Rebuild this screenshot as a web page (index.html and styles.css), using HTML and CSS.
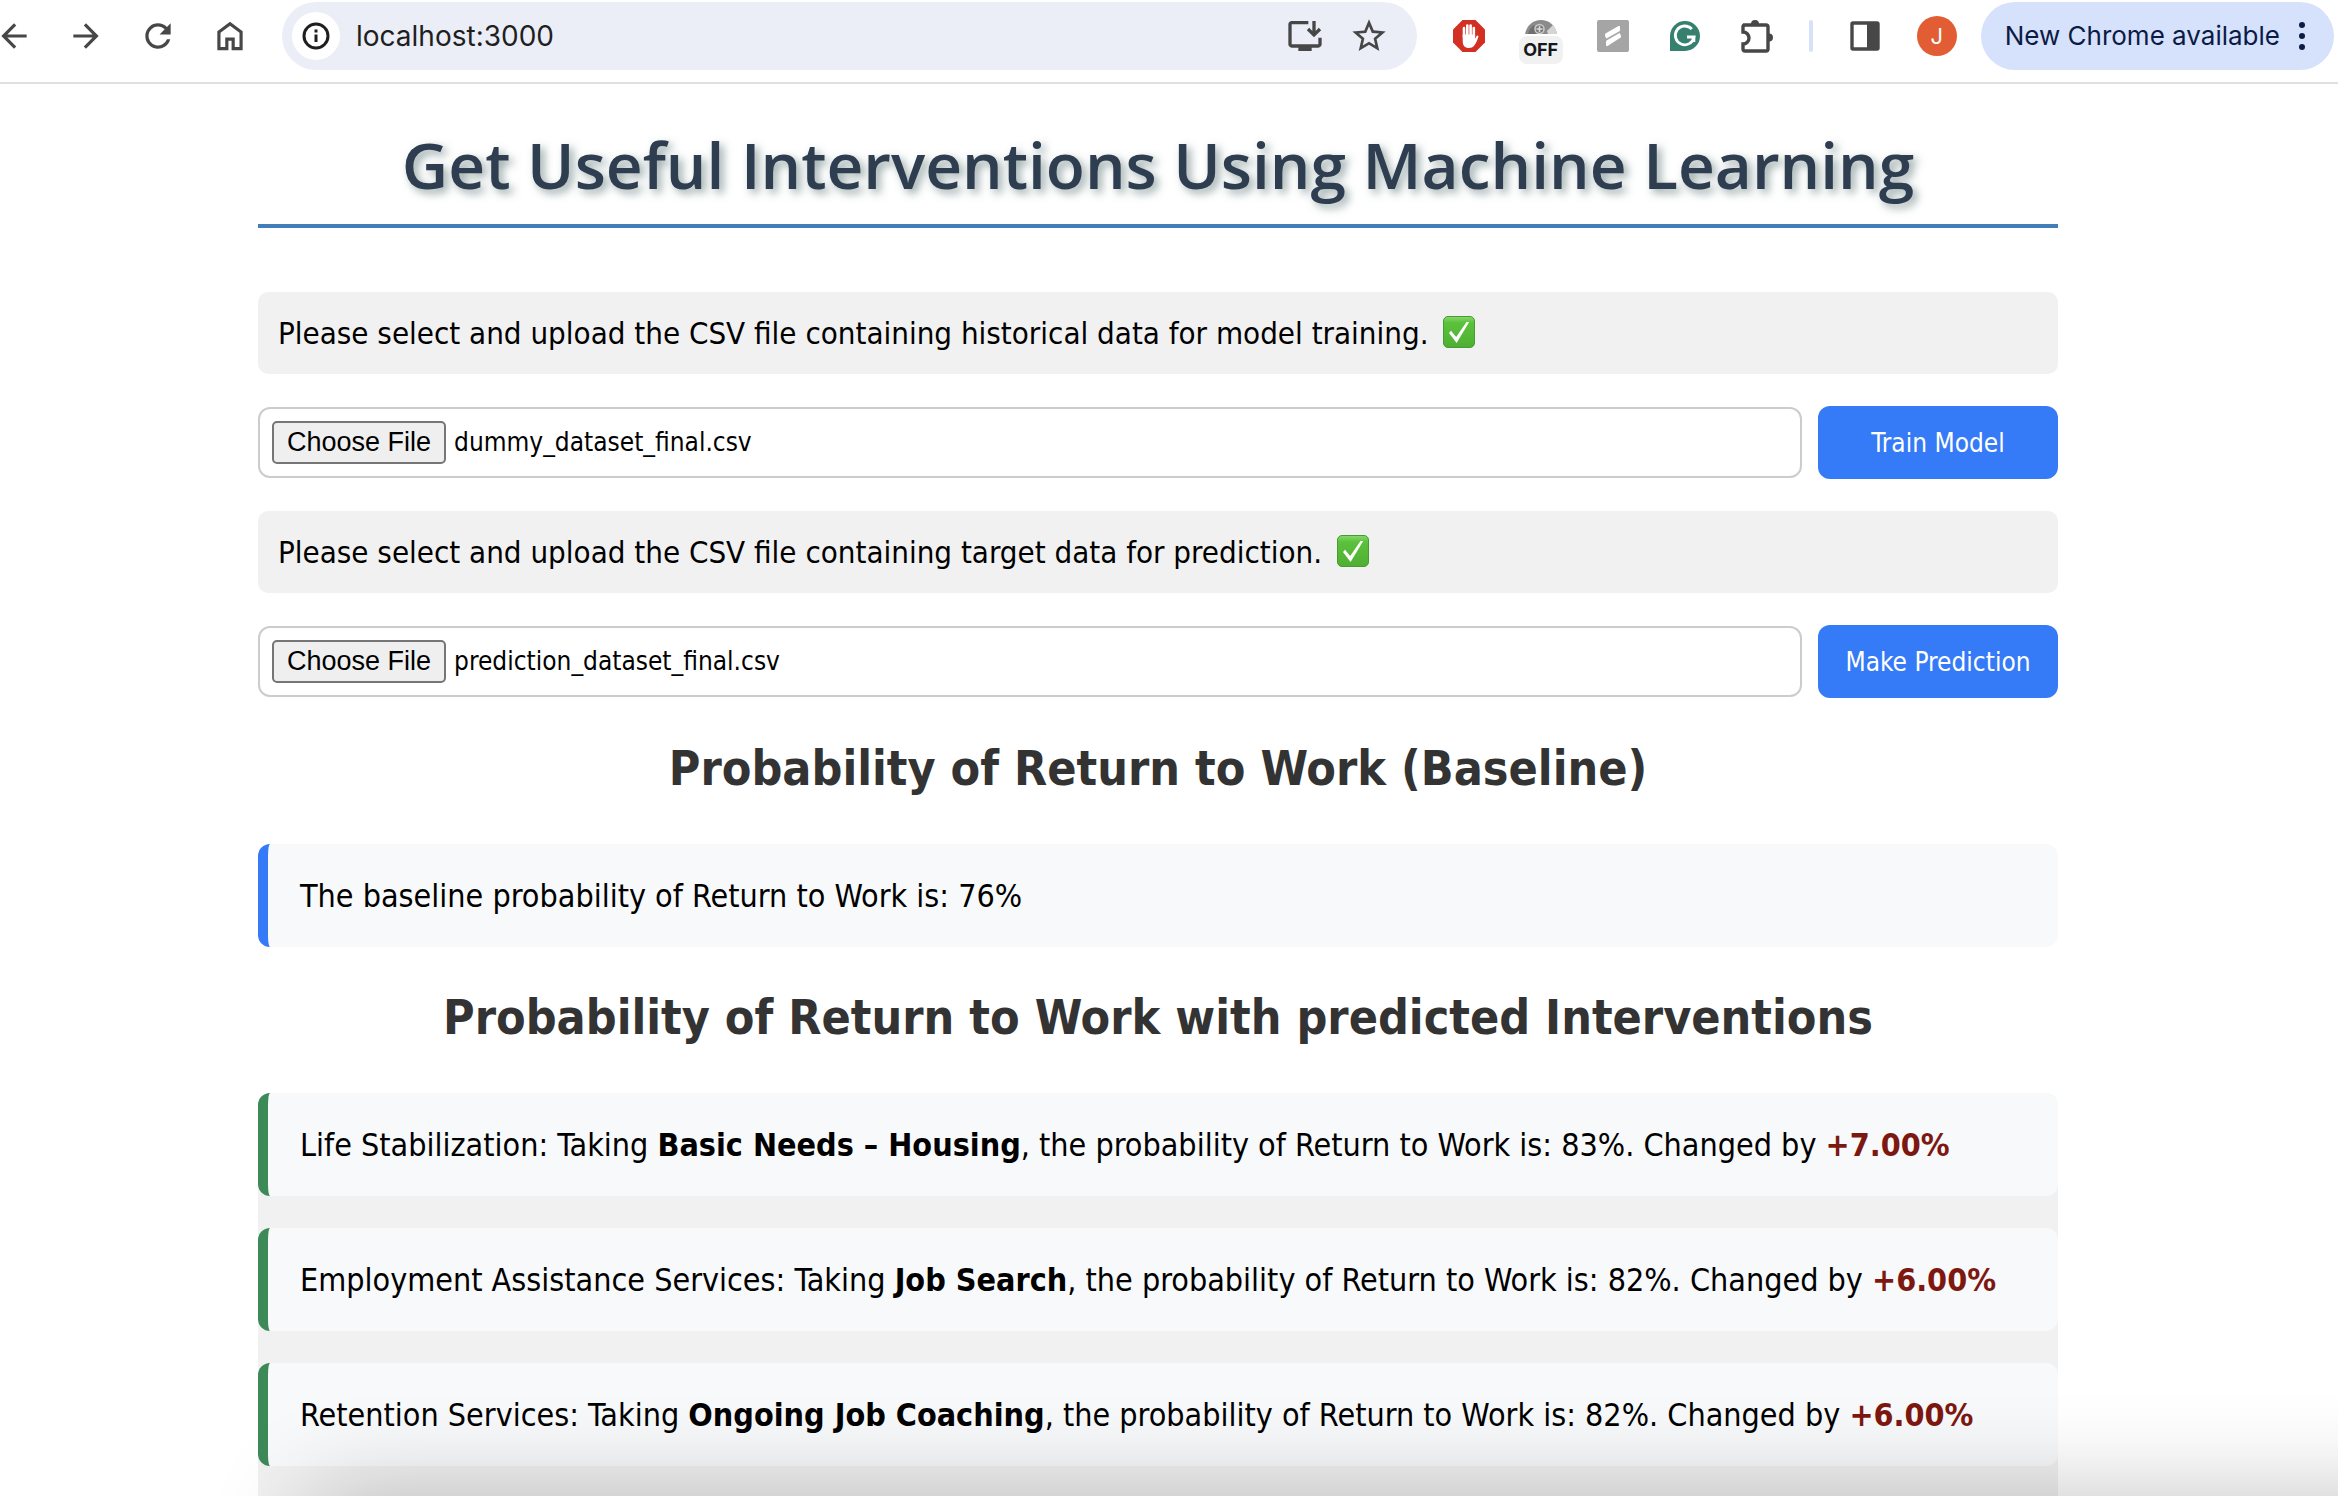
FILE: index.html
```html
<!DOCTYPE html>
<html lang="en">
<head>
<meta charset="utf-8">
<meta name="viewport" content="width=device-width, initial-scale=1">
<title>Get Useful Interventions Using Machine Learning</title>
<link rel="stylesheet" href="styles.css">
</head>
<body>
<header class="toolbar">
  <nav class="nav" aria-label="Navigation">
    <button class="tool" aria-label="Back"><svg class="icon" viewBox="0 0 24 24"><path d="M20 11H7.83l5.59-5.59L12 4l-8 8 8 8 1.41-1.41L7.83 13H20z"/></svg></button>
    <button class="tool" aria-label="Forward"><svg class="icon" viewBox="0 0 24 24"><path d="M4 13h12.17l-5.59 5.59L12 20l8-8-8-8-1.41 1.41L16.17 11H4z"/></svg></button>
    <button class="tool" aria-label="Reload"><svg class="icon" viewBox="0 0 24 24"><path d="M17.65 6.35A7.95 7.95 0 0 0 12 4a8 8 0 1 0 7.73 10h-2.08A6 6 0 1 1 12 6c1.66 0 3.14.69 4.22 1.78L13 11h7V4z"/></svg></button>
    <button class="tool" aria-label="Home"><svg class="icon" viewBox="0 0 24 24"><path d="M12 5.5l6 4.5v9h-3v-6H9v6H6v-9zM12 3L4 9v12h7v-6h2v6h7V9z"/></svg></button>
  </nav>
  <div class="omnibox">
    <button class="site-info" aria-label="Site information"><svg class="icon-small" viewBox="0 0 28 28"><circle cx="14" cy="14" r="12" fill="none" stroke="#1f1f1f" stroke-width="3"/><path d="M12.5 12.5h3V20h-3zM12.5 7.5h3v3h-3z" fill="#1f1f1f"/></svg></button>
    <input class="address" type="text" value="localhost:3000" aria-label="Address">
    <button class="page-action" aria-label="Install app"><svg class="icon-large" viewBox="0 0 24 24"><path d="M20 17H4V5h10V3H4c-1.1 0-2 .9-2 2v12c0 1.1.9 2 2 2h4v2h8v-2h4c1.1 0 2-.9 2-2v-4h-2z"/><path d="M17.4 3v8M13.8 7.800l3.6 3.6L21 7.8" fill="none" stroke="#474747" stroke-width="2"/></svg></button>
    <button class="page-action" aria-label="Bookmark this page"><svg class="icon-large" viewBox="0 0 24 24"><path d="M22 9.24l-7.19-.62L12 2 9.19 8.63 2 9.24l5.46 4.73L5.82 21 12 17.27 18.18 21l-1.63-7.03zM12 15.4l-3.76 2.27 1-4.28-3.32-2.88 4.38-.38L12 6.1l1.71 4.04 4.38.38-3.32 2.88 1 4.28z"/></svg></button>
  </div>
  <div class="extensions">
    <button class="tool" aria-label="Ad blocker"><svg class="icon-ext" viewBox="0 0 32 32"><path d="M9.5 0h13L32 9.5v13L22.5 32h-13L0 22.5v-13z" fill="#d33024"/><g fill="none" stroke="#fff" stroke-width="2.6" stroke-linecap="round"><path d="M11 17V8M14.3 16V5.5M17.6 16V5.5M20.8 17V8"/></g><path d="M9.7 14.5h12.4v4.2l1.5-2.6c.7-1.3 2.3-.6 1.7.9-1.2 3.2-2.1 6.4-4.2 8.8-1.3 1.5-3 2.2-5.2 2.2-4.1 0-6.2-2.6-6.2-7z" fill="#fff"/></svg></button>
    <button class="tool tool-badged" aria-label="Blocker, off"><svg class="dome" viewBox="0 0 32 14"><path d="M0 14C2 5 8 0 16 0s14 5 16 14z" fill="#8b8b8b"/><path d="M22 11l6-6c2 2 3 5 4 9h-9z" fill="#d5d5d5"/><path d="M3 14c1-4 3-7 6-9l3 9z" fill="#6f6f6f"/><circle cx="14.5" cy="9" r="4.5" fill="#777" stroke="#ccc" stroke-width="1.5"/><path d="M14.5 6v6M11.5 9h6" stroke="#ddd" stroke-width="1.5"/></svg><span class="badge">OFF</span></button>
    <button class="tool" aria-label="Scribe"><svg class="icon-ext" viewBox="0 0 32 32"><rect width="32" height="32" rx="2" fill="#a5a5a5"/><path d="M8.5 13.5L21.5 6q1.500-.5 1.5 1v3q0 1-1 1.5L9.5 18.5Q8 17 8 15q0-1 .5-1.5zM9.5 20.5L22.5 13q1.5 1.5 1.5 3.5 0 1-1 1.5L10.5 26Q9 26.5 9 25v-3q0-1 .5-1.5z" fill="#fff"/></svg></button>
    <button class="tool" aria-label="Grammarly"><svg class="icon-ext" viewBox="0 0 32 32"><path d="M16 1a15 15 0 0 1 0 30H1V16A15 15 0 0 1 16 1z" fill="#36806f"/><path d="M22.8 9.2A9.4 9.4 0 1 0 25 17h-7" fill="none" stroke="#fff" stroke-width="2.8"/><path d="M25.3 16v6" stroke="#fff" stroke-width="2"/></svg></button>
    <button class="tool" aria-label="Extensions"><svg class="icon-puzzle" viewBox="0 0 36 36"><path d="M4 7h23q2 0 2 2v22q0 2-2 2H6q-2 0-2-2v-5a6 6 0 0 0 0-12V9q0-2 2-2z" fill="none" stroke="#474747" stroke-width="3.4"/><path d="M12 6a4 4 0 0 1 8 0zM30 15.5a4 4 0 0 1 0 8z"/></svg></button>
  </div>
  <span class="divider"></span>
  <button class="tool" aria-label="Side panel"><svg class="icon-panel" viewBox="0 0 30 30"><rect x="2" y="2" width="26" height="26" rx="1" fill="none" stroke="#474747" stroke-width="3.4"/><path d="M17 2h11v26H17z"/></svg></button>
  <button class="tool" aria-label="Profile"><span class="avatar">J</span></button>
  <button class="update">New Chrome available <svg class="dots" viewBox="0 0 8 32"><circle cx="4" cy="5" r="3"/><circle cx="4" cy="16" r="3"/><circle cx="4" cy="27" r="3"/></svg></button>
</header>

<main class="page">
  <h1 class="title">Get Useful Interventions Using Machine Learning</h1>

  <form class="uploads">
    <label class="hint" for="training-file">Please select and upload the CSV file containing historical data for model training.
      <svg class="check" viewBox="0 0 32 32" role="img" aria-label="Done"><defs><linearGradient id="leaf" x1="0" y1="0" x2="0" y2="1"><stop offset="0" stop-color="#8ad871"/><stop offset=".2" stop-color="#5bc23b"/><stop offset="1" stop-color="#4fae33"/></linearGradient></defs><rect x=".5" y=".5" width="31" height="31" rx="4.5" fill="url(#leaf)" stroke="#469b32"/><path d="M6 17l2-2.2 5.2 6.2L23.5 6h2.7L13.6 27z" fill="#fff"/></svg>
    </label>
    <div class="upload-row">
      <input class="file" id="training-file" type="file" accept=".csv" data-name="dummy_dataset_final.csv">
      <button class="action" type="button">Train Model</button>
    </div>
    <label class="hint" for="target-file">Please select and upload the CSV file containing target data for prediction.
      <svg class="check" viewBox="0 0 32 32" role="img" aria-label="Done"><rect x=".5" y=".5" width="31" height="31" rx="4.5" fill="url(#leaf)" stroke="#469b32"/><path d="M6 17l2-2.2 5.2 6.2L23.5 6h2.7L13.6 27z" fill="#fff"/></svg>
    </label>
    <div class="upload-row">
      <input class="file" id="target-file" type="file" accept=".csv" data-name="prediction_dataset_final.csv">
      <button class="action" type="button">Make Prediction</button>
    </div>
  </form>

  <h2 class="heading">Probability of Return to Work (Baseline)</h2>
  <p class="card card-baseline">The baseline probability of Return to Work is: 76%</p>

  <h2 class="heading">Probability of Return to Work with predicted Interventions</h2>
  <ul class="results">
    <li class="card">Life Stabilization: Taking <strong>Basic Needs – Housing</strong>, the probability of Return to Work is: 83%. Changed by <strong class="change">+7.00%</strong></li>
    <li class="card">Employment Assistance Services: Taking <strong>Job Search</strong>, the probability of Return to Work is: 82%. Changed by <strong class="change">+6.00%</strong></li>
    <li class="card">Retention Services: Taking <strong>Ongoing Job Coaching</strong>, the probability of Return to Work is: 82%. Changed by <strong class="change">+6.00%</strong></li>
  </ul>
</main>
<div class="edge-shadow"></div>
<script src="files.js"></script>
</body>
</html>
```
FILE: styles.css
```css
* { box-sizing: border-box; }

body {
  margin: 0;
  min-height: 100vh;
  display: flex;
  flex-direction: column;
  background: #fff;
  color: #000;
  font-family: "DejaVu Sans Condensed", "DejaVu Sans", sans-serif;
}

button {
  border: 0;
  padding: 0;
  background: none;
  font-family: inherit;
  cursor: pointer;
}

/* Browser toolbar */
.toolbar {
  display: flex;
  align-items: center;
  padding: 2px 4px 12px 0;
  border-bottom: 2px solid #e0e0e0;
  overflow: hidden;
  font-family: Inter, sans-serif;
}

.nav { display: flex; margin: 0 16px 0 -22px; }
.extensions { display: flex; margin: 0 16px; }

.tool {
  width: 72px;
  height: 68px;
  flex: none;
  display: flex;
  align-items: center;
  justify-content: center;
}

.icon, .icon-large, .icon-puzzle, .icon-panel { fill: #474747; }
.icon { width: 38px; height: 38px; }
.icon-large { width: 40px; height: 40px; }
.icon-small { width: 28px; height: 28px; }
.icon-ext { width: 32px; height: 32px; }
.icon-puzzle { width: 36px; height: 36px; }
.icon-panel { width: 30px; height: 30px; }

.omnibox {
  flex: 1;
  min-width: 0;
  height: 68px;
  display: flex;
  align-items: center;
  padding: 0 16px 0 10px;
  border-radius: 34px;
  background: #ebeef7;
}

.site-info {
  width: 48px;
  height: 48px;
  flex: none;
  display: flex;
  align-items: center;
  justify-content: center;
  border-radius: 50%;
  background: #fff;
}

.address {
  flex: 1;
  min-width: 0;
  margin-left: 16px;
  padding: 0;
  border: 0;
  background: none;
  color: #1f1f1f;
  font: 28px/36px Inter, sans-serif;
}

.page-action {
  width: 64px;
  height: 64px;
  flex: none;
  display: flex;
  align-items: center;
  justify-content: center;
}

.tool-badged {
  flex-direction: column;
  gap: 2px;
  padding-top: 12px;
}

.dome { width: 32px; height: 14px; }

.badge {
  width: 44px;
  border-radius: 8px;
  background: #f1f1f1;
  color: #15181c;
  font: 700 18px/28px Inter, sans-serif;
  text-align: center;
}

.divider {
  width: 4px;
  height: 32px;
  margin-right: 16px;
  border-radius: 2px;
  background: #d6e1fb;
}

.avatar {
  width: 40px;
  height: 40px;
  border-radius: 50%;
  background: #e25d33;
  color: #fff;
  font: 22px/40px Inter, sans-serif;
}

.update {
  flex: none;
  display: flex;
  align-items: center;
  gap: 18px;
  height: 68px;
  margin-left: 8px;
  padding: 0 28px 0 24px;
  border-radius: 34px;
  background: #d6e1fb;
  color: #0b1b46;
  font: 26px/32px Inter, sans-serif;
}

.dots { width: 8px; height: 32px; fill: #0b1b46; }

/* Page */
.page {
  flex: 1;
  display: flex;
  flex-direction: column;
  width: calc(100% - 22px);
  max-width: 1800px;
  margin-right: calc(max(100% - 1822px, 0px) / 2 + 22px);
  margin-left: auto;
  padding-top: 37px;
}

.title {
  margin: 0 0 64px;
  padding-bottom: 15px;
  border-bottom: 4px solid #427eb7;
  color: #2f3d50;
  font: 600 64px/88px "Open Sans", sans-serif;
  text-align: center;
  text-shadow: 4px 4px 8px rgba(47, 79, 79, .5);
}

.uploads {
  display: flex;
  flex-direction: column;
  gap: 32px;
}

.hint {
  display: block;
  padding: 20px;
  border-radius: 10px;
  background: #f1f1f1;
  font-size: 31px;
  line-height: 42px;
}

.check { width: 32px; height: 32px; margin-left: 6px; vertical-align: -4px; }

.upload-row {
  display: flex;
  align-items: center;
  gap: 16px;
}

.file {
  flex: 1;
  min-width: 0;
  padding: 12px;
  border: 2px solid #ccc;
  border-radius: 12px;
  background: #fff;
  color: #000;
  font-family: inherit;
  font-size: 26px;
}

.file::file-selector-button {
  margin: 0 8px 0 0;
  padding: 4px 13px;
  border: 2px solid #767676;
  border-radius: 5px;
  background: #efefef;
  color: #000;
  font: 27px/31px "Liberation Sans", Arial, sans-serif;
}

.action {
  width: 240px;
  padding: 21px 0 19px;
  border-radius: 12px;
  background: #357af6;
  color: #fff;
  font-size: 26px;
  line-height: 33px;
}

.heading {
  margin: 42px 0 48px;
  color: #333;
  font-size: 48px;
  line-height: 56px;
  text-align: center;
}

.card {
  margin: 0;
  padding: 33px 32px 31px;
  border-left: 10px solid #3d8a59;
  border-radius: 12px;
  background: #f8f9fb;
  font-size: 32px;
  line-height: 39px;
}

.card-baseline { border-left-color: #357af6; }

.results {
  flex: 1;
  display: flex;
  flex-direction: column;
  gap: 32px;
  margin: 0;
  padding: 0;
  border-radius: 12px 12px 0 0;
  background: #f1f1f1;
  list-style: none;
}

.change { color: #7d1810; }

/* Soft shade rising from the lower edge of the window */
.edge-shadow {
  position: fixed;
  top: 100%;
  right: -200px;
  left: 310px;
  height: 200px;
  box-shadow: 0 0 100px rgba(0, 0, 0, .24);
  pointer-events: none;
}
```
FILE: files.js
```js
document.querySelectorAll('.file').forEach((input) => {
  const transfer = new DataTransfer();
  transfer.items.add(new File([''], input.dataset.name, { type: 'text/csv' }));
  input.files = transfer.files;
});
```
